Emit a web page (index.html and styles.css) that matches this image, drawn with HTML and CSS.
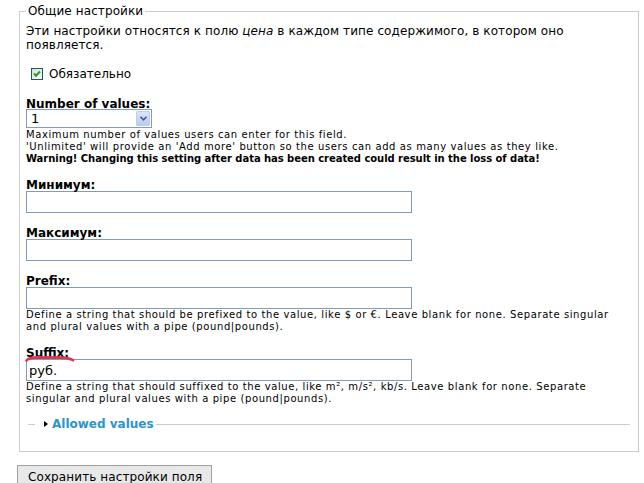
FILE: index.html
```html
<!DOCTYPE html>
<html lang="ru">

<head>
    <meta charset="UTF-8">
    <meta name="viewport" content="width=device-width, initial-scale=1.0">
    <title>Настройки поля</title>
    <link rel="stylesheet" href="styles.css">
</head>

<body>

    <form class="field-form" action="#">
        <fieldset class="group">
            <legend>Общие настройки</legend>

            <p class="help">Эти настройки относятся к полю <em>цена</em> в каждом типе содержимого, в котором оно появляется.</p>

            <div class="check-item">
                <span class="checkbox">
                    <svg width="10" height="10" viewBox="0 0 10 10">
                        <path d="M2 4.5 L4 6.8 L8 2.5" fill="none" stroke="#21a121" stroke-width="2"/>
                    </svg>
                </span>
                <label>Обязательно</label>
            </div>

            <div class="form-item first-item">
                <label>Number of values:</label>
                <div class="select">
                    <span class="select-value">1</span>
                    <span class="select-arrow">
                        <svg width="7" height="5" viewBox="0 0 7 5">
                            <path d="M0.5 0.8 L3.5 3.8 L6.5 0.8" fill="none" stroke="#4d6185" stroke-width="1.6"/>
                        </svg>
                    </span>
                </div>
                <div class="description">
                    Maximum number of values users can enter for this field.<br>
                    'Unlimited' will provide an 'Add more' button so the users can add as many values as they like.<br>
                    <strong>Warning! Changing this setting after data has been created could result in the loss of data!</strong>
                </div>
            </div>

            <div class="form-item">
                <label for="min">Минимум:</label>
                <input class="text" type="text" id="min">
            </div>

            <div class="form-item">
                <label for="max">Максимум:</label>
                <input class="text" type="text" id="max">
            </div>

            <div class="form-item">
                <label for="prefix">Prefix:</label>
                <input class="text" type="text" id="prefix">
                <div class="description">Define a string that should be prefixed to the value, like $ or €. Leave blank for none. Separate singular and plural values with a pipe (pound|pounds).</div>
            </div>

            <div class="form-item marked">
                <label for="suffix">Suffix:</label>
                <svg class="underline" width="52" height="10" viewBox="0 0 52 10">
                    <path d="M1.5 6.5 Q4 3.6 12 3.4 L36 3.6 Q45 3.9 48 6.2" fill="none" stroke="#e3334d" stroke-width="2.6" stroke-linecap="round"/>
                </svg>
                <input class="text" type="text" id="suffix" value="руб.">
                <div class="description">Define a string that should suffixed to the value, like m², m/s², kb/s. Leave blank for none. Separate singular and plural values with a pipe (pound|pounds).</div>
            </div>

            <fieldset class="collapsed">
                <legend><a href="#">Allowed values</a></legend>
            </fieldset>
        </fieldset>

        <button type="submit" class="save">Сохранить настройки поля</button>
    </form>

</body>

</html>
```

FILE: styles.css
```css
body {
    margin: 0;
    padding: 0;
    font: 12px/14px "DejaVu Sans", Verdana, sans-serif;
    color: #000;
    background: #fff;
}

.group {
    width: 620px;
    box-sizing: border-box;
    margin: 4px 0 0 19px;
    padding: 6px 6px 20px;
    border: 1px solid #ccc;
    min-inline-size: 0;
}

.group > legend {
    padding: 0 2px;
    line-height: 14px;
    letter-spacing: 0.1px;
}

.help {
    margin: 0;
    letter-spacing: 0.1px;
}

/* required checkbox */
.check-item {
    display: flex;
    align-items: flex-start;
    margin-top: 15px;
}

.checkbox {
    width: 12px;
    height: 12px;
    box-sizing: border-box;
    margin: 1px 6px 0 5px;
    border: 1px solid #1c5180;
    background: linear-gradient(135deg, #dcdcd7, #fbfbf9);
    display: flex;
    align-items: center;
    justify-content: center;
}

.form-item {
    margin-top: 13px;
}

.first-item {
    margin-top: 16px;
}

.form-item label {
    display: block;
    font-weight: bold;
    line-height: 12px;
    padding-top: 1px;
}

.select {
    width: 126px;
    height: 19px;
    box-sizing: border-box;
    margin: -1px 0 1px;
    border: 1px solid #7f9db9;
    display: flex;
    align-items: center;
    justify-content: space-between;
    padding: 1px;
    font-size: 13px;
}

.select-value {
    padding-left: 3px;
}

.select-arrow {
    width: 14px;
    height: 15px;
    box-sizing: border-box;
    border: 1px solid #bccdf0;
    border-radius: 1px;
    background: linear-gradient(#dbe5fb, #b7cbf5);
    display: flex;
    align-items: center;
    justify-content: center;
}

input.text {
    display: block;
    width: 386px;
    height: 22px;
    box-sizing: border-box;
    margin: 0;
    padding: 0 2px;
    border: 1px solid #7f9db9;
    font: 13px "DejaVu Sans", Verdana, sans-serif;
    color: #000;
}

.description {
    max-width: 600px;
    font-size: 10px;
    line-height: 12px;
    letter-spacing: 0.6px;
}

.description strong {
    letter-spacing: -0.05px;
}

.marked {
    position: relative;
}

/* red marker stroke under the Suffix label */
.underline {
    position: absolute;
    left: -1px;
    top: 8px;
}

.collapsed {
    margin: 12px 2px 0;
    padding: 0 0 0 7px;
    border: 0;
    border-top: 1px solid #ccc;
    min-inline-size: 0;
}

.collapsed legend {
    padding: 0 2px;
    line-height: 14px;
}

.collapsed legend a {
    position: relative;
    display: inline-block;
    padding-left: 15px;
    color: #2b94d3;
    font-weight: bold;
    text-decoration: none;
}

.collapsed legend a::before {
    content: "";
    position: absolute;
    left: 7px;
    top: 4px;
    border-left: 4px solid #000;
    border-top: 3.5px solid transparent;
    border-bottom: 3.5px solid transparent;
}

.save {
    display: block;
    margin: 13px 0 0 17px;
    padding: 3px 9px 3px 10px;
    border: 1px solid #a0a0a0;
    background: #e8e8e8;
    font: 12px/16px "DejaVu Sans", Verdana, sans-serif;
    letter-spacing: 0.1px;
    color: #000;
}
```
